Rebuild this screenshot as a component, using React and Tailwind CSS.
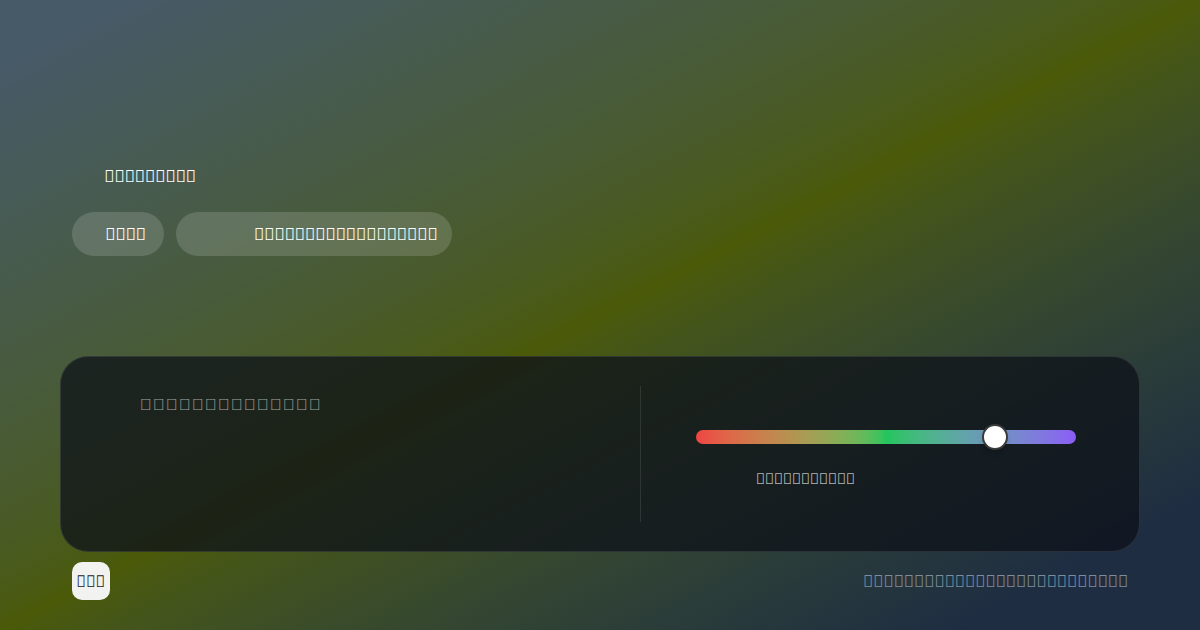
import React from "react";

// the captions in the source render as missing-glyph boxes
const box = (n) => "\uE000".repeat(n);

function Pill({ pad, children }) {
  return (
    <div className={`flex h-11 items-center rounded-full bg-white/15 text-[17px] text-white ${pad}`}>
      {children}
    </div>
  );
}

function HueSlider({ value }) {
  return (
    <div className="relative h-[14px] w-[380px] rounded-full bg-linear-to-r from-[#ef4444] via-[#22c55e] to-[#8b5cf6]">
      <div
        className="absolute top-1/2 h-[26px] w-[26px] -translate-x-1/2 -translate-y-1/2 rounded-full border-2 border-[#3a3a3a] bg-white shadow-md"
        style={{ left: `${value}%` }}
      />
    </div>
  );
}

export default function App() {
  return (
    <div
      className="flex h-[630px] w-[1200px] flex-col bg-linear-to-br from-[#475a68] from-5% via-[#4a5a08] via-50% to-[#1e2d42] to-90% px-[60px]"
      style={{ fontFamily: '"Noto Sans", sans-serif' }}
    >
      {/* heading + chips */}
      <div className="px-3">
        <div className="mt-[164px] h-6 pl-8 text-[17px] leading-6 text-white">{box(9)}</div>
        <div className="mt-6 flex gap-3">
          <Pill pad="pl-[33px] pr-[18px]">{box(4)}</Pill>
          <Pill pad="pl-[78px] pr-[15px]">{box(18)}</Pill>
        </div>
      </div>

      {/* main panel */}
      <div className="mt-[100px] flex h-[196px] rounded-[28px] border border-white/10 bg-[#0e1219]/75">
        <div className="w-[579px] pl-[79px] pt-9">
          <div
            className="text-[16px] leading-6 tracking-[1px] text-white/60"
            style={{ fontFamily: '"Liberation Sans", sans-serif' }}
          >
            {box(14)}
          </div>
        </div>
        <div className="my-[29px] w-px bg-white/10" />
        <div className="flex-1 pl-[55px] pt-[73px]">
          <HueSlider value={78.7} />
          <div className="ml-[60px] mt-6 text-[15px] leading-5 text-white/70">{box(11)}</div>
        </div>
      </div>

      {/* footer */}
      <div className="mt-[10px] flex items-center justify-between px-3">
        <div className="flex h-[38px] w-[38px] items-center justify-center rounded-[10px] bg-[#f2f2f0] text-[16px] text-[#222]">
          {box(3)}
        </div>
        <div className="text-[17px] text-[#7f8d9b]">{box(26)}</div>
      </div>
    </div>
  );
}
